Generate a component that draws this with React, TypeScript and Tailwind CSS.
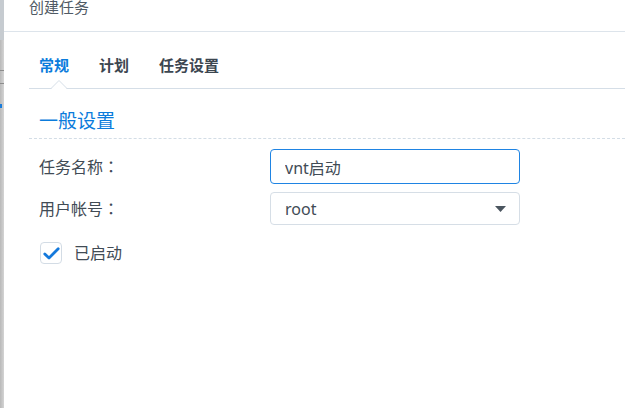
import { useState } from 'react'

const font = { fontFamily: '"Noto Sans", "Noto Sans CJK SC", sans-serif' }

function Tabs() {
  const tabs = ['常规', '计划', '任务设置']
  return (
    <div className="relative ml-[25px] flex h-[57px] items-center gap-[30px] border-b border-[#d5dee7] pl-[10px] pt-[10px]">
      {tabs.map((t, i) => (
        <div key={t} className={'text-[15px] font-bold ' + (i === 0 ? 'text-[#0b7cdc]' : 'text-[#3c4650]')}>{t}</div>
      ))}
      {/* caret notch under active tab */}
      <svg className="absolute bottom-[-1px] left-[22px]" width="16" height="9" viewBox="0 0 16 9">
        <path d="M0 8.5 L8 0.5 L16 8.5" fill="#fff" stroke="#d5dee7" strokeWidth="1" />
        <rect x="1" y="8" width="14" height="1.2" fill="#fff" />
      </svg>
    </div>
  )
}

function Label({ text }: { text: string }) {
  return (
    <div className="w-[231px] text-[16px] text-[#414b55]">
      {text}<span style={{ fontFamily: '"Noto Sans CJK TC", sans-serif' }}>：</span>
    </div>
  )
}

export default function App() {
  const [name, setName] = useState('vnt启动')
  const [on, setOn] = useState(true)
  return (
    <div className="flex h-[408px] w-[625px] overflow-hidden bg-white" style={font}>
      <div className="flex w-[4px] shrink-0 flex-col bg-gradient-to-r from-[#b9b9b9] to-[#d4d4d4]">
        <div className="h-[40px] bg-[#c6cbd0]" />
        <div className="mt-[30px] h-[1px] bg-[#8c8c8c]" />
        <div className="mt-[12px] h-[1px] bg-[#8c8c8c]" />
        <div className="mt-[20px] h-[4px] w-[2px] bg-[#1a7ddb]" />
      </div>
      <div className="flex min-w-0 flex-1 flex-col">
        <div className="flex h-[32px] items-start border-b border-[#dde4eb] pl-[25px]">
          <span className="-mt-[4px] text-[15px] text-[#505a64]">创建任务</span>
        </div>
        <Tabs />
        <div className="ml-[25px] mt-[19px] border-b border-dashed border-[#d3dde6] pb-[4px] pl-[10px]">
          <div className="text-[19px] leading-[26px] text-[#0b7cdc]">一般设置</div>
        </div>
        <div className="mt-[10px] flex flex-col gap-[8px] pl-[35px]">
          <div className="flex items-center">
            <Label text="任务名称" />
            <input
              value={name}
              onChange={(e) => setName(e.target.value)}
              className="h-[35px] w-[250px] rounded-[4px] border border-[#1f84e3] px-[14px] text-[16px] text-[#414b55] outline-none"
            />
          </div>
          <div className="flex items-center">
            <Label text="用户帐号" />
            <div className="flex h-[33px] w-[250px] items-center justify-between rounded-[4px] border border-[#d6dee6] px-[14px] text-[16px] text-[#414b55]">
              <span>root</span>
              <svg width="11" height="6" viewBox="0 0 11 6" className="mr-[-1px]"><path d="M0 0 H11 L5.5 6 Z" fill="#4b555f" /></svg>
            </div>
          </div>
          <label className="mt-[8px] flex cursor-pointer items-center gap-[12px]">
            <span
              onClick={() => setOn((v) => !v)}
              className="ml-[1px] flex h-[22px] w-[22px] items-center justify-center rounded-[4px] border border-[#d3dce5] bg-white"
            >
              {on && (
                <svg width="17" height="13" viewBox="0 0 17 13"><path d="M1.8 7 L6 11 L15.2 1.8" fill="none" stroke="#1479dc" strokeWidth="2.8" strokeLinecap="round" strokeLinejoin="round" /></svg>
              )}
            </span>
            <span className="text-[16px] text-[#414b55]">已启动</span>
          </label>
        </div>
      </div>
    </div>
  )
}
